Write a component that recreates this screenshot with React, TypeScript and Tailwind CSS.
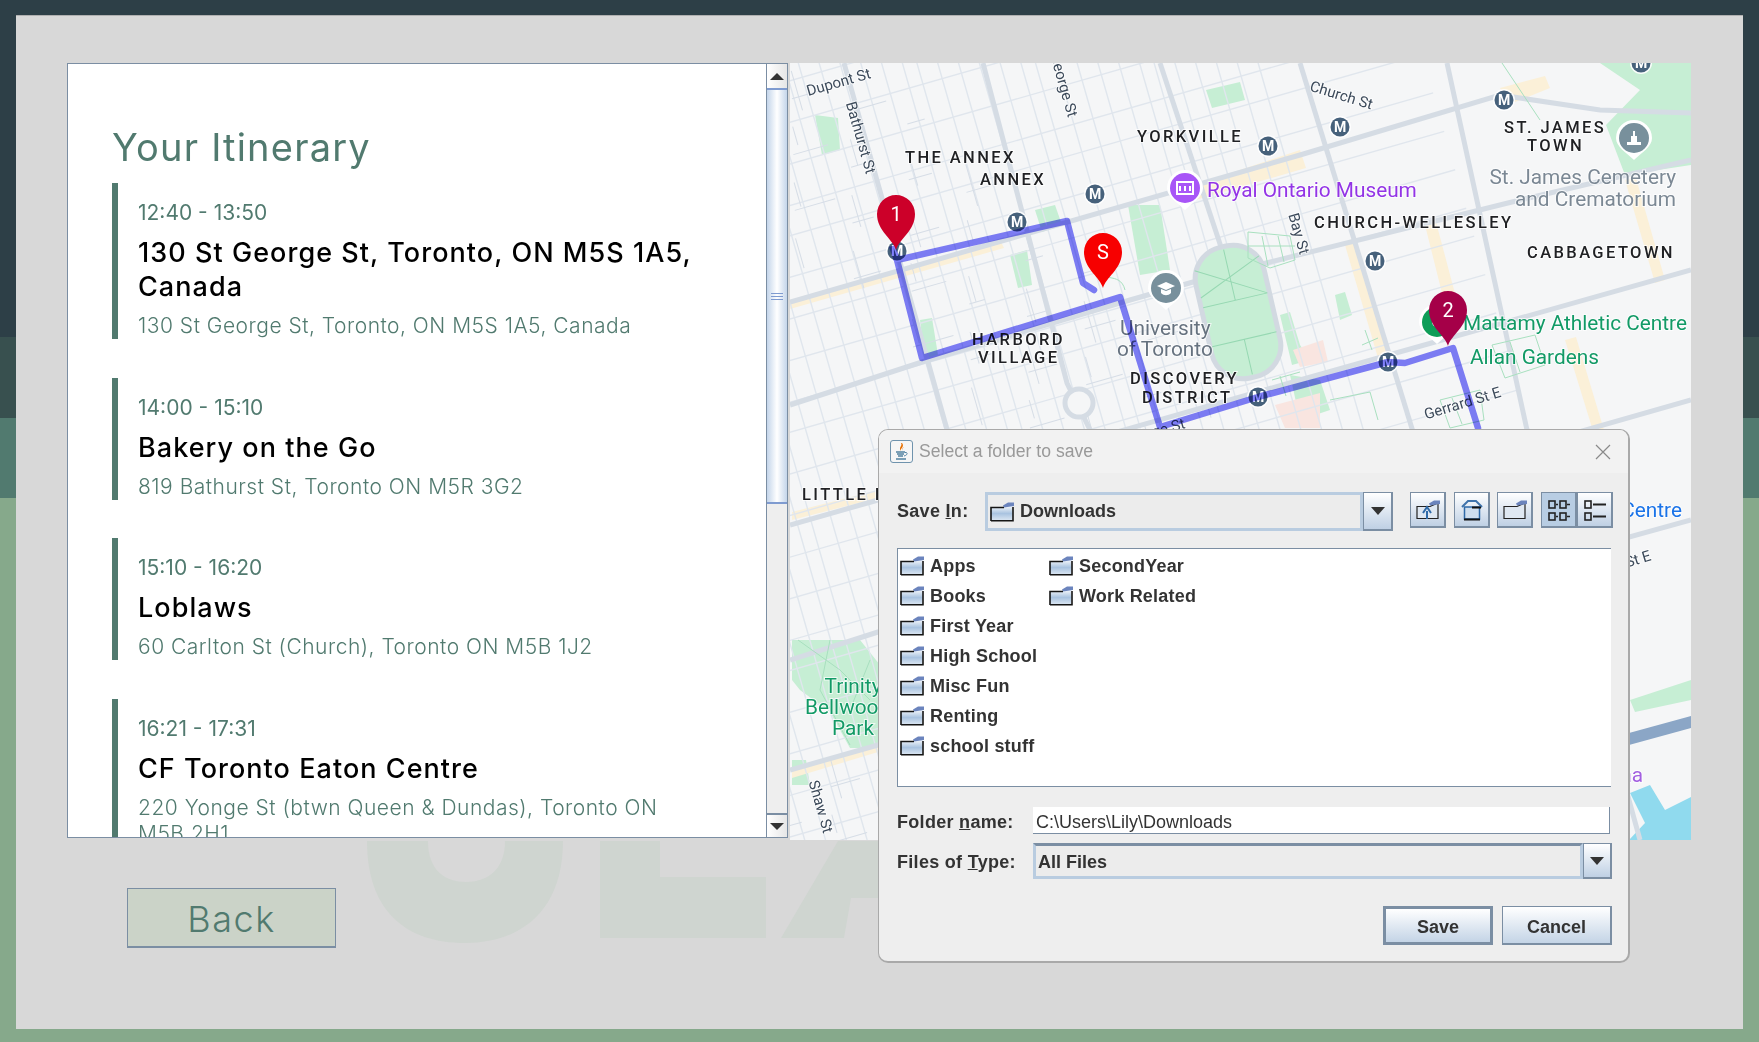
import React from 'react'

const MONT = 'font-["Inter",sans-serif]'

const items = [
  { time: '12:40 - 13:50', title: '130 St George St, Toronto, ON M5S 1A5, Canada', addr: '130 St George St, Toronto, ON M5S 1A5, Canada' },
  { time: '14:00 - 15:10', title: 'Bakery on the Go', addr: '819 Bathurst St, Toronto ON M5R 3G2' },
  { time: '15:10 - 16:20', title: 'Loblaws', addr: '60 Carlton St (Church), Toronto ON M5B 1J2' },
  { time: '16:21 - 17:31', title: 'CF Toronto Eaton Centre', addr: '220 Yonge St (btwn Queen & Dundas), Toronto ON M5B 2H1' },
]

const folders = [
  ['Apps', 'SecondYear'],
  ['Books', 'Work Related'],
  ['First Year'],
  ['High School'],
  ['Misc Fun'],
  ['Renting'],
  ['school stuff'],
]

function FolderIcon() {
  return (
    <svg width="24" height="20" viewBox="0 0 24 20" className="shrink-0">
      <defs>
        <linearGradient id="fold" x1="0" y1="0" x2="0" y2="1">
          <stop offset="0" stopColor="#ffffff" />
          <stop offset="0.55" stopColor="#a9c3e0" />
          <stop offset="1" stopColor="#dbe6f2" />
        </linearGradient>
      </defs>
      <path d="M1 5.5 H14 L22.5 3 V18.5 H1 Z" fill="url(#fold)" />
      <path d="M13 3.5 L18 0.5 H24 V4 L14 5.5 Z" fill="#6b84bd" />
      <path d="M1 19 V5.5 H14 M1 18.8 H23 V5" fill="none" stroke="#151515" strokeWidth="1.6" />
    </svg>
  )
}

function JavaIcon() {
  return (
    <div className="w-[23px] h-[23px] rounded-[3px] border border-[#6f93ad] bg-[#f6f6f6] flex items-center justify-center">
      <svg width="17" height="19" viewBox="0 0 17 19">
        <path d="M8 1 C10 4 5 5 8 9 C7 6 12 5 9 1 Z" fill="#e76f00" />
        <path d="M11 5 C9 6 9 7 10 9 C9 7 10 6 11 5 Z" fill="#e76f00" />
        <path d="M3 10 H12 M4 12 H11 M5 14 H10 M3 17 H13" stroke="#5382a1" strokeWidth="1.3" fill="none" />
        <path d="M12 10.5 C15 10 15 13 11 14" stroke="#5382a1" fill="none" />
      </svg>
    </div>
  )
}

function ToolBtn({ active, children }: { active?: boolean; children: React.ReactNode }) {
  return (
    <div
      className={
        active
          ? 'w-[36px] h-[36px] border border-[#7b8ea3] border-r-2 border-b-2 bg-[#b8cde3] flex items-center justify-center'
          : 'w-[36px] h-[36px] border border-[#7b8ea3] border-r-2 border-b-2 bg-linear-to-b from-white to-[#bfd0e4] flex items-center justify-center'
      }
    >
      {children}
    </div>
  )
}

function ComboArrow({ big }: { big?: boolean }) {
  return (
    <div className={big ? 'w-[30px] h-[39px] border-2 border-[#7b8ea3] border-l border-t bg-linear-to-b from-white to-[#bfd0e4] flex items-center justify-center' : 'w-[29px] h-[36px] border-2 border-[#7b8ea3] border-l border-t bg-linear-to-b from-white to-[#bfd0e4] flex items-center justify-center'}>
      <div className="w-0 h-0 border-l-[7px] border-r-[7px] border-t-[8px] border-l-transparent border-r-transparent border-t-[#333]" />
    </div>
  )
}

function Pin({ x, y, color, label }: { x: number; y: number; color: string; label: string }) {
  // x,y = tip of the pin
  return (
    <g transform={`translate(${x} ${y})`}>
      <path d="M0 0 C-3 -11 -19 -19 -19 -36 A19 19 0 1 1 19 -36 C19 -19 3 -11 0 0 Z" fill={color} />
      <text x="0" y="-29" textAnchor="middle" fontSize="20" fill="#fff" fontFamily="Roboto, sans-serif">{label}</text>
    </g>
  )
}

function Metro({ x, y }: { x: number; y: number }) {
  return (
    <g transform={`translate(${x} ${y})`}>
      <circle r="11" fill="#fff" opacity="0.9" />
      <circle r="9.5" fill="#46617b" />
      <text x="0" y="5" textAnchor="middle" fontSize="14" fontWeight="700" fill="#fff" fontFamily="Roboto, sans-serif">M</text>
    </g>
  )
}

function Poi({ x, y, color, children }: { x: number; y: number; color: string; children: React.ReactNode }) {
  return (
    <g transform={`translate(${x} ${y})`}>
      <path d="M-18 0 A18 18 0 1 1 18 0 C18 9 8 14 0 22 C-8 14 -18 9 -18 0 Z" fill="#fff" />
      <circle r="15" fill={color} />
      {children}
    </g>
  )
}

function Hood({ x, y, spacing = 2.4, children }: { x: number; y: number; spacing?: number; children: string }) {
  return (
    <text x={x} y={y} fontSize="16.5" fontWeight="500" letterSpacing={spacing} fill="#202124" stroke="#fff" strokeOpacity="0.75" strokeWidth="2" paintOrder="stroke" fontFamily="Roboto, sans-serif">
      {children}
    </text>
  )
}

function Label({ x, y, color, size = 20.8, anchor = 'start', rotate, children }: { x: number; y: number; color: string; size?: number; anchor?: 'start' | 'middle' | 'end'; rotate?: number; children: string }) {
  return (
    <text
      x={x}
      y={y}
      fontSize={size}
      fill={color}
      stroke="#fff"
      strokeOpacity="0.7"
      strokeWidth="2"
      paintOrder="stroke"
      textAnchor={anchor}
      fontFamily="Roboto, sans-serif"
      transform={rotate ? `rotate(${rotate} ${x} ${y})` : undefined}
    >
      {children}
    </text>
  )
}

const greens = [
  '1600,63 1691,63 1691,165 1625,175 1606,125 1640,90',
  '792,640 860,640 880,665 880,748 850,748 830,712 800,690 792,680',
  '1128,205 1160,205 1170,270 1140,275',
  '815,115 838,118 840,150 822,155',
  '1206,90 1240,82 1245,100 1212,108',
  '1035,210 1055,205 1062,225 1042,232',
  '920,320 932,318 938,355 925,360',
  '1010,255 1027,250 1032,285 1018,288',
  '1280,315 1290,312 1300,345 1310,360 1292,365',
  '1335,295 1345,292 1352,315 1340,320',
  '1630,700 1691,680 1691,700 1635,712',
  '792,760 806,760 810,785 792,785',
  '1290,375 1320,380 1330,410 1300,420',
]

const tans = [
  '790,300 1000,240 1004,248 790,309',
  '1180,190 1300,150 1306,168 1185,203',
  '1500,88 1545,76 1550,88 1510,104',
  '1425,225 1436,222 1462,320 1450,325',
  '1345,245 1356,242 1388,355 1378,358',
  '1565,340 1576,337 1616,470 1606,473',
  '792,512 878,490 878,498 792,520',
  '792,770 878,745 878,752 792,778',
  '1625,180 1636,178 1665,280 1655,283',
]

const pinks = ['1293,350 1323,340 1328,362 1300,367', '1275,405 1320,393 1320,428 1285,428']

const majors = [
  '844,63 950,440 1060,840',
  '790,302 1300,155 1500,95 1600,110 1691,113',
  '790,405 922,362 1130,300 1200,280',
  '1258,265 1520,200 1691,160',
  '983,63 1067,383 1095,440',
  '1160,63 1222,250',
  '1447,63 1527,430 1640,840',
  '1300,63 1440,520',
  '790,525 878,500 1300,380 1691,270',
  '790,660 878,632 1691,400',
  '790,770 878,745 1691,520',
]

const greenPaths = [
  'M1248,232 L1290,236 L1295,260 L1270,268 L1248,258 Z M1262,236 L1268,266 M1278,236 L1284,262 M1248,246 L1295,246',
  'M1272,380 L1300,372 M1280,376 L1286,396',
  'M1440,400 L1480,390 L1484,420 L1450,428 Z M1452,398 L1462,424',
  'M1492,345 L1535,335 L1545,365 L1505,378 Z M1510,342 L1520,372',
  'M1365,330 L1372,350 M1362,345 L1378,338',
  'M1330,400 L1370,392 L1378,420',
  'M1500,60 L1540,120',
  'M798,640 L840,670 L870,700 M830,640 L820,690 L850,745 M870,660 L850,710',
  'M1090,265 C1100,285 1120,270 1125,290',
]

const ewMinor = Array.from({ length: 26 }, (_, i) => 38 * i + ((i * 13) % 11))
const nsMinor = Array.from({ length: 66 }, (_, i) => 19 * i + ((i * 7) % 6))
const alleys = Array.from({ length: 260 }, (_, i) => ({
  x: (i * 83) % 1200,
  y: (i * 137) % 1000,
  len: 16 + ((i * 11) % 28),
  flat: i % 2 === 0,
}))

function MapDrawing() {
  return (
    <svg viewBox="790 63 901 777" width="901" height="777" className="block">
      <rect x="790" y="63" width="901" height="777" fill="#f5f6f7" />
      {greens.map((p) => (
        <polygon key={p} points={p} fill="#c6eed4" />
      ))}
      {tans.map((p) => (
        <polygon key={p} points={p} fill="#fbf0d8" />
      ))}
      {pinks.map((p) => (
        <polygon key={p} points={p} fill="#f9e5e0" />
      ))}
      <polygon points="1630,793 1645,823 1629,840 1691,840 1691,797 1665,810 1650,785" fill="#90daee" />
      <g transform="rotate(-16 790 63)" stroke="#e0e6ed" strokeWidth="1.4">
        {nsMinor.map((x, i) => (
          <line key={x} x1={x} y1={-100 + (i % 5) * 30} x2={x} y2={1100} />
        ))}
        {ewMinor.map((y) => (
          <line key={y} x1={-100} y1={y} x2={1400} y2={y} />
        ))}
        {alleys.map((a) => (
          <line key={`${a.x}-${a.y}`} x1={a.x} y1={a.y} x2={a.flat ? a.x + a.len : a.x} y2={a.flat ? a.y : a.y + a.len} stroke="#d6dde6" strokeWidth="1" />
        ))}
      </g>
      {majors.map((p) => (
        <polyline key={p} points={p} fill="none" stroke="#d5dce4" strokeWidth="5" />
      ))}
      <g transform="rotate(-13 1238 312)">
        <rect x="1203" y="245" width="70" height="134" rx="32" fill="#c6eed4" stroke="#d2d9e1" strokeWidth="5" />
        <path d="M1205 290 L1271 262 M1205 262 L1271 300 M1238 248 V300 M1205 300 H1271 M1205 340 H1271 M1238 340 V376" stroke="#96d8b2" strokeWidth="1" fill="none" />
      </g>
      <path d={greenPaths.join(' ')} stroke="#a8e0bf" strokeWidth="1" fill="none" />
      <circle cx="1079" cy="403" r="14" fill="#f5f6f7" stroke="#d5dce4" strokeWidth="5" />
      <polygon points="1629,733 1691,716 1691,728 1629,745" fill="#8ba6c6" />

      <Label x={840} y={87} color="#3c4a5a" size={15} anchor="middle" rotate={-16}>Dupont St</Label>
      <Label x={856} y={139} color="#3c4a5a" size={15} anchor="middle" rotate={74}>Bathurst St</Label>
      <Label x={1068} y={118} color="#3c4a5a" size={15} anchor="end" rotate={74}>St George St</Label>
      <Label x={1294} y={235} color="#3c4a5a" size={15} anchor="middle" rotate={74}>Bay St</Label>
      <Label x={1340} y={100} color="#3c4a5a" size={15} anchor="middle" rotate={17}>Church St</Label>
      <Label x={1464} y={408} color="#3c4a5a" size={15} anchor="middle" rotate={-17}>Gerrard St E</Label>
      <Label x={816} y={808} color="#3c4a5a" size={15} anchor="middle" rotate={74}>Shaw St</Label>
      <Label x={1652} y={560} color="#3c4a5a" size={15} anchor="end" rotate={-17}>Dundas St E</Label>
      <Label x={1186} y={428} color="#3c4a5a" size={15} anchor="end" rotate={-16}>College St</Label>

      <Hood x={905} y={163}>THE ANNEX</Hood>
      <Hood x={980} y={185}>ANNEX</Hood>
      <Hood x={1137} y={142}>YORKVILLE</Hood>
      <Hood x={972} y={345}>HARBORD</Hood>
      <Hood x={978} y={363}>VILLAGE</Hood>
      <Hood x={1130} y={384}>DISCOVERY</Hood>
      <Hood x={1142} y={403}>DISTRICT</Hood>
      <Hood x={1504} y={133}>ST. JAMES</Hood>
      <Hood x={1527} y={151}>TOWN</Hood>
      <Hood x={1314} y={228}>CHURCH-WELLESLEY</Hood>
      <Hood x={1527} y={258}>CABBAGETOWN</Hood>
      <Hood x={802} y={500}>LITTLE ITALY</Hood>

      <Label x={1120} y={335} color="#66727f">University</Label>
      <Label x={1117} y={356} color="#66727f">of Toronto</Label>
      <Label x={1676} y={184} color="#7b8894" anchor="end">St. James Cemetery</Label>
      <Label x={1676} y={206} color="#7b8894" anchor="end">and Crematorium</Label>
      <Label x={1207} y={197} color="#9334e6">Royal Ontario Museum</Label>
      <Label x={1463} y={330} color="#129a66">Mattamy Athletic Centre</Label>
      <Label x={1470} y={364} color="#129a66">Allan Gardens</Label>
      <Label x={853} y={693} color="#129a66" anchor="middle">Trinity</Label>
      <Label x={853} y={714} color="#129a66" anchor="middle">Bellwoods</Label>
      <Label x={853} y={735} color="#129a66" anchor="middle">Park</Label>
      <Label x={1682} y={517} color="#1a73e8" anchor="end">Eaton Centre</Label>
      <Label x={1643} y={782} color="#a35fe0" anchor="end">Scotiabank Arena</Label>

      {[
        [1095, 194],
        [1017, 222],
        [1268, 146],
        [1504, 100],
        [1340, 127],
        [1375, 261],
        [1641, 63],
        [897, 251],
        [1258, 397],
        [1388, 362],
      ].map(([x, y]) => (
        <Metro key={x} x={x} y={y} />
      ))}

      <Poi x={1185} y={188} color="#a855f7">
        <rect x="-8" y="-6" width="16" height="12" fill="none" stroke="#fff" strokeWidth="2" />
        <path d="M-5 -2 V3 M0 -2 V3 M5 -2 V3" stroke="#fff" strokeWidth="2" />
      </Poi>
      <Poi x={1166} y={288} color="#78909c">
        <path d="M-9 -2 L0 -6 L9 -2 L0 2 Z M-5 1 V5 C-2 8 2 8 5 5 V1 L0 3 Z" fill="#fff" />
      </Poi>
      <Poi x={1634} y={138} color="#78909c">
        <path d="M-7 7 H7 V4 H3 V-2 H1 V-7 H-1 V-2 H-3 V4 H-7 Z" fill="#fff" />
      </Poi>
      <Poi x={1437} y={322} color="#0f9d58">
        <circle r="5" fill="#fff" />
      </Poi>

      <g className="mix-blend-multiply" fill="none" stroke="#8080fa" strokeWidth="6.5" strokeLinejoin="round">
        <polyline points="1094,290 1083,283 1067,221 897,260 922,358 1120,297 1160,427 1258,397 1388,362 1405,363 1453,348 1478,428" strokeLinecap="round" />
        <polyline points="897,260 892,246" />
      </g>

      <Pin x={896} y={250} color="#cc0029" label="1" />
      <Pin x={1103} y={288} color="#f70000" label="S" />
      <Pin x={1448} y={346} color="#a50048" label="2" />
    </svg>
  )
}

function Dialog() {
  return (
    <div className='absolute left-[878px] top-[429px] w-[752px] h-[534px] rounded-[10px] border-2 border-[#a9a9a9] border-t border-l bg-[#eeeeee] font-["Liberation_Sans",sans-serif] flex flex-col text-[#333] overflow-hidden'>
      <div className="h-[43px] shrink-0 bg-[#f2f2f2] flex items-center pl-[11px] pr-[17px]">
        <JavaIcon />
        <span className="ml-[6px] text-[17.6px] text-[#999]">Select a folder to save</span>
        <svg width="16" height="16" viewBox="0 0 16 16" className="ml-auto">
          <path d="M1 1 L15 15 M15 1 L1 15" stroke="#8a8a8a" strokeWidth="1.2" />
        </svg>
      </div>

      <div className="flex items-start pl-[18px] pr-[15px] pt-[19px] h-[75px] shrink-0">
        <span className="w-[88px] pt-[7px] text-[18px] font-bold leading-[24px] tracking-[0.3px]">Save <u>I</u>n:</span>
        <div className="w-[378px] h-[39px] border-[3px] border-[#b9cce0] bg-[#ececec] flex items-center pl-[2px] gap-[6px] text-[18px] font-bold">
          <FolderIcon />
          Downloads
        </div>
        <ComboArrow big />
        <div className="ml-auto flex">
          <div className="mr-[8px]">
            <ToolBtn>
              <svg width="24" height="20" viewBox="0 0 24 20">
                <path d="M1 6.5 H14 L22 3 V18.5 H1 Z" fill="#dfe8f2" stroke="#222" strokeWidth="1.2" />
                <path d="M13 3.5 L18 0.5 H24 V4 L14 5.5 Z" fill="#6b84bd" />
                <path d="M11 19 V11 M7 13 L11 7 L15 13" fill="none" stroke="#2f6aa8" strokeWidth="2" />
              </svg>
            </ToolBtn>
          </div>
          <div className="mr-[7px]">
            <ToolBtn>
              <svg width="24" height="24" viewBox="0 0 24 24">
                <path d="M2 9 L8 3 H16 L22 9" fill="none" stroke="#3f73ab" strokeWidth="2" />
                <rect x="4.5" y="9" width="15" height="12" fill="#cfdeee" stroke="#2f6aa8" strokeWidth="1.5" />
                <path d="M4 21.5 H20 M12 9.5 H21" stroke="#111" strokeWidth="1.8" />
              </svg>
            </ToolBtn>
          </div>
          <div className="mr-[8px]">
            <ToolBtn>
              <svg width="24" height="20" viewBox="0 0 24 20">
                <path d="M1 6.5 H14 L22 3 V18.5 H1 Z" fill="#dfe8f2" stroke="#222" strokeWidth="1.2" />
                <path d="M13 3.5 L18 0.5 H24 V4 L14 5.5 Z" fill="#6b84bd" />
              </svg>
            </ToolBtn>
          </div>
          <ToolBtn active>
            <svg width="24" height="24" viewBox="0 0 24 24" fill="none" stroke="#222" strokeWidth="1.6">
              <rect x="2" y="3" width="6" height="7" />
              <rect x="13" y="3" width="6" height="7" />
              <rect x="2" y="15" width="6" height="7" />
              <rect x="13" y="15" width="6" height="7" />
              <path d="M9 6.5 H11 M20 6.5 H23 M9 18.5 H11 M20 18.5 H23" />
            </svg>
          </ToolBtn>
          <ToolBtn>
            <svg width="24" height="24" viewBox="0 0 24 24" fill="none" stroke="#222" strokeWidth="1.6">
              <rect x="2" y="3" width="6" height="7" />
              <rect x="2" y="15" width="6" height="7" />
              <path d="M10 6.5 H23 M10 18.5 H23" strokeWidth="2" />
            </svg>
          </ToolBtn>
        </div>
      </div>

      <div className="ml-[18px] mr-[17px] h-[239px] shrink-0 bg-white border-l border-t border-b border-[#7b8ea3] pt-[2px]">
        {folders.map((row) => (
          <div key={row[0]} className="flex h-[30px] items-center text-[18px] font-bold tracking-[0.2px]">
            <div className="w-[151px] flex items-center gap-[6px] pl-[2px]">
              <FolderIcon />
              {row[0]}
            </div>
            {row[1] && (
              <div className="flex items-center gap-[6px]">
                <FolderIcon />
                {row[1]}
              </div>
            )}
          </div>
        ))}
      </div>

      <div className="flex items-center pl-[18px] pr-[18px] mt-[20px] h-[27px] shrink-0">
        <span className="w-[136px] pt-[3px] text-[18px] font-bold tracking-[0.3px]">Folder <u>n</u>ame:</span>
        <div className="flex-1 h-full bg-white border-r border-b border-[#7b8ea3] pl-[3px] text-[18px] leading-[31px]">C:\Users\Lily\Downloads</div>
      </div>

      <div className="flex items-center pl-[18px] pr-[16px] mt-[9px] h-[36px] shrink-0">
        <span className="w-[136px] pt-[3px] text-[18px] font-bold tracking-[0.3px]">Files of <u>T</u>ype:</span>
        <div className="flex-1 h-full border-[3px] border-[#b9cce0] border-t-[#7b8ea3] bg-[#ececec] pl-[2px] pt-[3px] text-[18px] font-bold flex items-center">All Files</div>
        <ComboArrow />
      </div>

      <div className="flex justify-end gap-[9px] pr-[16px] mt-[27px] text-[18px] font-bold">
        <div className="w-[110px] h-[39px] border-[3px] border-[#7b8ea3] bg-linear-to-b from-white to-[#c4d4e6] flex items-center justify-center pt-[4px]">Save</div>
        <div className="w-[110px] h-[39px] border border-[#7b8ea3] border-b-2 border-r-2 bg-linear-to-b from-white to-[#c4d4e6] flex items-center justify-center pt-[4px]">Cancel</div>
      </div>
    </div>
  )
}

export default function App() {
  return (
    <div className="relative w-[1759px] h-[1042px] overflow-hidden flex flex-col">
      <div className="h-[337px] bg-[#2d3f47]" />
      <div className="h-[81px] bg-[#38504f]" />
      <div className="h-[80px] bg-[#517a6f]" />
      <div className="flex-1 bg-[#86a98b]" />

      <div className="absolute left-[16px] top-[15px] w-[1727px] h-[1014px] bg-[#d8d8d8] pt-[47px] pl-[51px] border-t border-[#b0b0b0]">
        <svg width="560" height="110" viewBox="0 0 560 110" className="absolute left-[340px] top-[825px]">
          <path d="M11 0 C11 70 50 102 109 102 C165 102 207 70 207 0 H149 C149 30 130 41 110 41 C90 41 72 30 72 0 Z" fill="#cfd5d0" />
          <path d="M244 0 H304 V36 H410 V97 H244 Z" fill="#cfd5d0" />
          <path d="M425 97 H488 L495 57 H560 V0 H482 Z" fill="#cfd5d0" />
        </svg>

        <div className="relative flex">
          <div className="w-[723px] h-[777px] pr-[2px] flex">
            <div className={`flex-1 h-[775px] bg-white overflow-hidden border-t border-l border-b border-[#7b8ea3] pt-[60px] pl-[44px] pr-[56px] ${MONT}`}>
              <h1 className="text-[38px] leading-[46px] font-normal text-[#517a6f] mb-[13px] tracking-[1.2px]">Your Itinerary</h1>
              <div className="flex flex-col gap-[38.6px]">
                {items.map((it) => (
                  <div key={it.time} className="border-l-[6px] border-[#517a6f] pl-[20px] pt-[17px]">
                    <div className="text-[21px] leading-[26px] text-[#517a6f]">{it.time}</div>
                    <div className="mt-[10px] text-[27px] leading-[34px] font-[450] text-black tracking-[1.05px]">{it.title}</div>
                    <div className="mt-[9px] text-[21px] leading-[26px] font-light text-[#517a6f] tracking-[0.5px]">{it.addr}</div>
                  </div>
                ))}
              </div>
            </div>
            <div className="w-[22px] h-[775px] flex flex-col border border-[#7b8ea3] bg-[#eeeeee]">
              <div className="h-[24px] flex items-center justify-center bg-linear-to-r from-white to-[#e6e6e6]">
                <div className="w-0 h-0 border-l-[7px] border-r-[7px] border-b-[7px] border-l-transparent border-r-transparent border-b-[#333]" />
              </div>
              <div className="h-[416px] border-y-2 border-[#7f9bd0] bg-linear-to-r from-[#c4d5ea] via-white to-[#c4d5ea] flex flex-col items-center justify-center gap-[2px]">
                <div className="w-[12px] h-px bg-[#7f9bd0]" />
                <div className="w-[12px] h-px bg-[#7f9bd0]" />
                <div className="w-[12px] h-px bg-[#7f9bd0]" />
              </div>
              <div className="flex-1" />
              <div className="h-[24px] flex items-center justify-center border-t-2 border-[#7b8ea3] bg-linear-to-r from-white to-[#e6e6e6]">
                <div className="w-0 h-0 border-l-[7px] border-r-[7px] border-t-[7px] border-l-transparent border-r-transparent border-t-[#333]" />
              </div>
            </div>
          </div>
          <MapDrawing />
        </div>

        <button className={`relative mt-[48px] ml-[60px] w-[209px] h-[60px] pt-[2px] bg-[#cbd3c8] border border-[#7b8ea3] border-b-2 text-[36px] font-light tracking-[1.5px] text-[#517a6f] ${MONT}`}>
          Back
        </button>
      </div>

      <Dialog />
    </div>
  )
}
